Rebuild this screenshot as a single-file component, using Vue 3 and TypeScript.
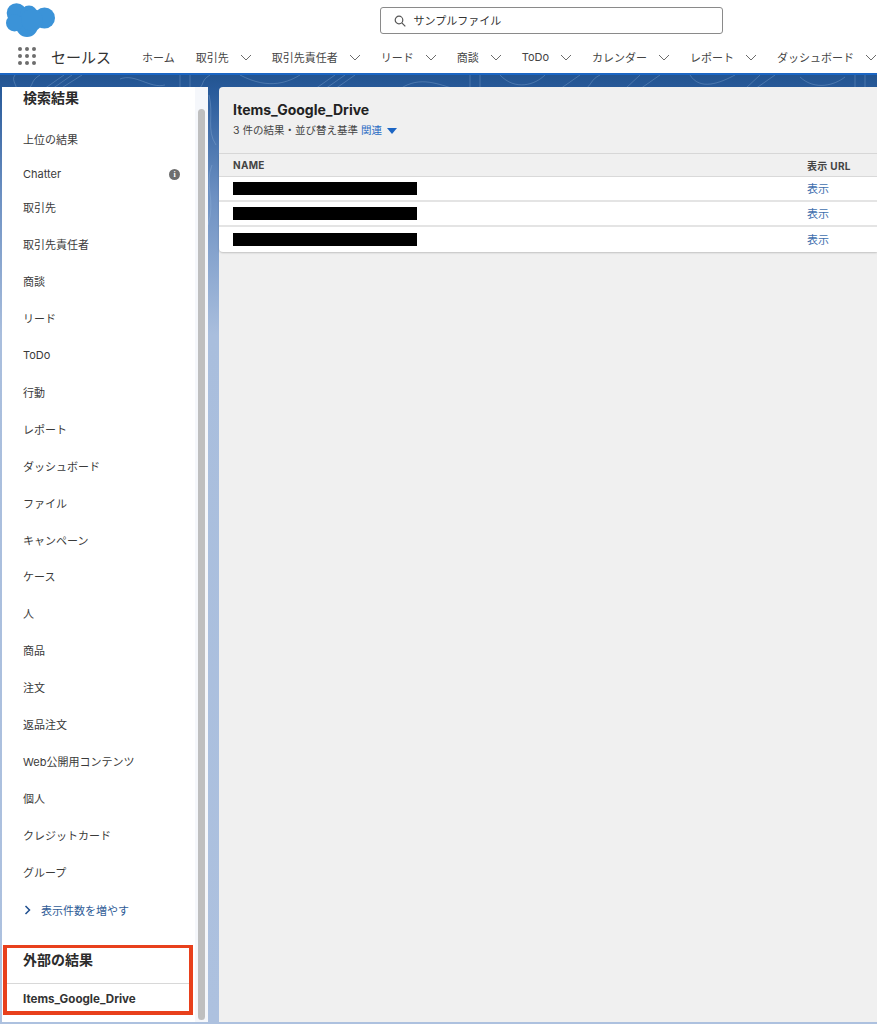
<script setup lang="ts">
interface NavItem { label: string; menu: boolean }
const nav: NavItem[] = [
  { label: 'ホーム', menu: false },
  { label: '取引先', menu: true },
  { label: '取引先責任者', menu: true },
  { label: 'リード', menu: true },
  { label: '商談', menu: true },
  { label: 'ToDo', menu: true },
  { label: 'カレンダー', menu: true },
  { label: 'レポート', menu: true },
  { label: 'ダッシュボード', menu: true },
]
const results: string[] = ['上位の結果', 'Chatter', '取引先', '取引先責任者', '商談', 'リード', 'ToDo', '行動', 'レポート', 'ダッシュボード', 'ファイル', 'キャンペーン', 'ケース', '人', '商品', '注文', '返品注文', 'Web公開用コンテンツ', '個人', 'クレジットカード', 'グループ']
const rows = [1, 2, 3]
const dots = [1, 2, 3, 4, 5, 6, 7, 8, 9]
</script>

<template>
  <div class="page">
    <header class="header">
      <div class="top">
        <svg class="logo" width="50" height="35" viewBox="0 0 50 35" fill="#3b93d8">
          <circle cx="10.500" cy="10" r="9.800"/>
          <circle cx="23" cy="11" r="8.500"/>
          <circle cx="38.500" cy="15" r="10.500"/>
          <circle cx="21" cy="23" r="11"/>
          <circle cx="8.500" cy="20" r="8.500"/>
          <circle cx="26" cy="17" r="11"/>
        </svg>
        <div class="search">
          <svg width="12" height="12" viewBox="0 0 12 12" fill="none" stroke="#555" stroke-width="1.200"><circle cx="5" cy="5" r="3.800"/><path d="M7.800 7.800L11.300 11.300"/></svg>
          <span class="search-text">サンプルファイル</span>
        </div>
      </div>
      <nav class="nav">
        <div class="launcher"><i v-for="d in dots" :key="d"></i></div>
        <span class="app">セールス</span>
        <div class="tabs">
          <div v-for="n in nav" :key="n.label" class="tab">
            <span>{{ n.label }}</span>
            <svg v-if="n.menu" width="12" height="7" viewBox="0 0 12 7" fill="none" stroke="#6b6b6b" stroke-width="1"><path d="M1 1l5 5 5-5"/></svg>
          </div>
        </div>
      </nav>
    </header>
    <div class="stage">
      <svg class="contours" width="877" height="160" viewBox="0 0 877 160" fill="none" stroke="#9dbbe0" stroke-opacity=".45" stroke-width=".7">
        <path d="M15 0C10 6 20 12 16 20M40 0C30 6 34 10 28 14M64 0L44 14M72 0L52 14M82 0L60 14M120 4C135 -2 150 14 165 10M180 0V14M190 0V14M210 0C200 6 205 10 198 14"/>
        <path d="M240 0C270 16 290 6 300 0M335 0L315 14M345 0L325 14M355 0L335 14M400 14C420 0 440 10 455 14M470 0V14M480 0V14M500 0C515 16 535 10 545 0M580 0L560 14M600 0C590 5 592 10 585 14"/>
        <path d="M640 0L625 14M660 0L640 14M690 0C700 16 720 8 735 0M760 0L745 14M775 0L755 14M800 2C815 16 835 10 845 2M855 0V14M865 0V14"/>
        <path d="M209 20C214 40 206 55 216 70M212 90C204 110 216 125 208 150"/>
      </svg>
      <aside class="sidebar">
        <div class="scroll-col">
          <h2 class="side-title">検索結果</h2>
          <ul class="list">
            <li v-for="r in results" :key="r" class="item">
              <span>{{ r }}</span>
              <span v-if="r === 'Chatter'" class="info">i</span>
            </li>
          </ul>
          <div class="more">
            <svg width="7" height="10" viewBox="0 0 7 10" fill="none" stroke="#1f4f8f" stroke-width="1.500"><path d="M1.500 1l4 4-4 4"/></svg>
            <span>表示件数を増やす</span>
          </div>
          <section class="external">
            <h2 class="ext-title">外部の結果</h2>
            <div class="ext-item">Items_Google_Drive</div>
          </section>
        </div>
        <div class="track"><div class="thumb"></div></div>
      </aside>
      <main class="panel">
        <div class="panel-head">
          <h1>Items_Google_Drive</h1>
          <p>3 件の結果・並び替え基準 <a>関連</a><svg width="10" height="6" viewBox="0 0 10 6"><path fill="#1b65c4" d="M0 0h10L5 6z"/></svg></p>
        </div>
        <div class="table">
          <div class="thead"><span class="c1">NAME</span><span class="c2">表示 URL</span></div>
          <div v-for="r in rows" :key="r" class="row">
            <span class="c1"><i class="redact"></i></span><a class="c2">表示</a>
          </div>
        </div>
      </main>
    </div>
  </div>
</template>

<style>
html, body { margin: 0; padding: 0; background: #fff; }
</style>

<style scoped>
* { box-sizing: border-box; }
.page { width: 877px; height: 1024px; overflow: hidden; display: flex; flex-direction: column; font-family: Inter, "Noto Sans CJK JP", sans-serif; color: #2e2e2e; }
.header { height: 73px; background: #fff; flex: none; }
.top { height: 39px; position: relative; display: flex; justify-content: center; padding: 7px 0 0 225px; }
.logo { position: absolute; left: 6px; top: 3px; }
.search { width: 343px; height: 27px; border: 1px solid #8a8a8a; border-radius: 3px; display: flex; align-items: center; gap: 8px; padding-left: 13px; font-size: 11px; color: #333; }
.search-text { margin-top: -2px; }
.nav { height: 34px; display: flex; align-items: center; padding-left: 18px; }
.launcher { width: 18px; display: grid; grid-template-columns: repeat(3, 4px); gap: 3px; margin-top: -1px; }
.launcher i { width: 4px; height: 4px; border-radius: 50%; background: #6d6d6d; }
.app { font-size: 15px; margin-left: 15px; width: 91px; color: #333; flex: none; }
.tabs { display: flex; gap: 20px; margin-top: 2px; font-size: 11px; color: #444; white-space: nowrap; }
.tab { display: flex; align-items: center; gap: 11px; }
.tab:first-child { margin-right: 1px; }
.stage { position: relative; flex: 1; border-top: 2px solid #1b66c4; padding: 12px 0 2px 2px; display: flex; gap: 11px; background: linear-gradient(#235490 0, #285a9a 15px, #6c90c2 120px, #a9bedd 260px, #adc1df 100%); }
.contours { position: absolute; left: 0; top: 0; }
.sidebar { position: relative; width: 206px; height: 935px; background: #fff; display: flex; }
.scroll-col { width: 193px; flex: none; overflow: hidden; }
.side-title { margin: 0; padding: 2px 0 0 21px; font-size: 14px; line-height: 18px; font-weight: 700; color: #2b2b2b; height: 35px; }
.list { list-style: none; margin: 0; padding: 0; }
.item { height: 36.900px; display: flex; align-items: center; justify-content: space-between; padding: 0 15px 0 21px; font-size: 11px; color: #3a3a3a; }
.item:nth-child(1) { height: 35px; padding-bottom: 1px; }
.item:nth-child(2) { height: 34px; }
.item:nth-child(3) { height: 35px; padding-bottom: 3px; }
.info { width: 11px; height: 11px; border-radius: 50%; background: #6e6e6e; color: #fff; font: 700 8px/11px "Liberation Serif", serif; text-align: center; }
.more { height: 37px; margin-top: 1px; display: flex; align-items: center; gap: 10px; padding-left: 22px; font-size: 11px; color: #2f5c97; }
.external { margin: 17px 0 0 1px; width: 190px; height: 70px; border: 4px solid #e8401c; border-top-width: 3px; }
.ext-title { margin: 0; height: 36px; padding: 3px 0 0 16px; font-size: 14px; line-height: 18px; font-weight: 700; color: #2b2b2b; border-bottom: 1px solid #d8d8d8; }
.ext-item { padding: 8px 0 0 16px; font-size: 11.600px; line-height: 14px; font-weight: 700; color: #333; }
.track { width: 13px; background: #f5f7fb; padding-top: 22px; }
.thumb { width: 7px; height: 911px; margin-left: 3px; background: #bfbfbf; border-radius: 4px; }
.panel { position: relative; flex: 1; height: 935px; background: #f0f0f0; border-radius: 4px 0 0 0; }
.panel-head { height: 67px; padding: 14px 14px 0; border-bottom: 1px solid #d9d9d9; }
.panel-head h1 { margin: 0; font-size: 14px; line-height: 18px; font-weight: 700; color: #222; }
.panel-head p { margin: 5px 0 0; font-size: 10.500px; line-height: 14px; color: #444; }
.panel-head a { color: #2b6cc4; }
.panel-head svg { margin-left: 5px; }
.table { background: #fff; box-shadow: 0 1px 2px rgba(0,0,0,.2); border-radius: 0 0 0 4px; }
.thead { height: 23px; display: flex; align-items: center; background: #f0f0f0; border-bottom: 1px solid #d9d9d9; font-size: 10px; font-weight: 700; color: #444; letter-spacing: .3px; }
.row { height: 25px; display: flex; align-items: center; border-bottom: 2px solid #e4e4e4; font-size: 11px; }
.row:last-child { border-bottom: 0; }
.row a.c2 { margin-top: -2px; }
.c1 { width: 588px; padding-left: 14px; display: flex; }
.c2 { white-space: nowrap; }
a.c2 { color: #3f6fae; }
.redact { width: 184px; height: 13px; background: #000; }
</style>
